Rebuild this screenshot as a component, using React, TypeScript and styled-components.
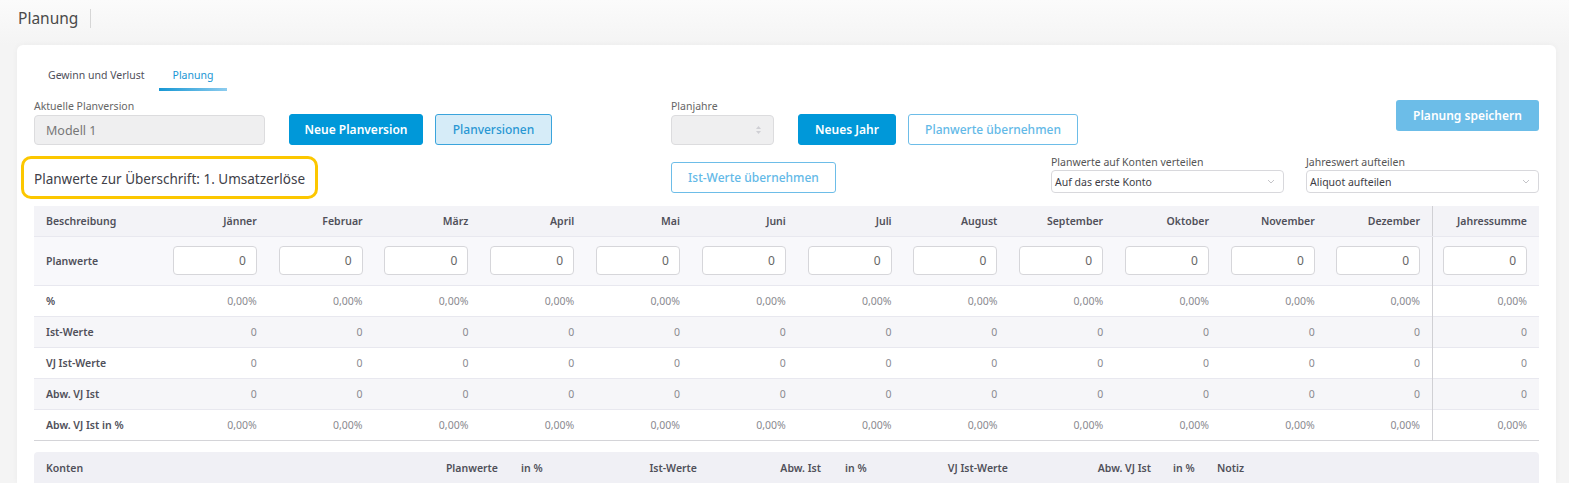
import React from "react";
import styled, { createGlobalStyle } from "styled-components";

const GlobalStyle = createGlobalStyle`
  html, body {
    margin: 0;
    padding: 0;
    background: #f4f4f4;
    font-family: "Noto Sans", "Open Sans", sans-serif;
  }
  * { box-sizing: border-box; }
`;

const months = [
  "Jänner",
  "Februar",
  "März",
  "April",
  "Mai",
  "Juni",
  "Juli",
  "August",
  "September",
  "Oktober",
  "November",
  "Dezember",
];

const rows = [
  { label: "%", value: "0,00%", shaded: false },
  { label: "Ist-Werte", value: "0", shaded: true },
  { label: "VJ Ist-Werte", value: "0", shaded: false },
  { label: "Abw. VJ Ist", value: "0", shaded: true },
  { label: "Abw. VJ Ist in %", value: "0,00%", shaded: false },
];

const kontenCols = [
  { label: "Konten", w: 340, align: "left", pad: 12 },
  { label: "Planwerte", w: 136, align: "right", pad: 12 },
  { label: "in %", w: 60, align: "left", pad: 11 },
  { label: "Ist-Werte", w: 139, align: "right", pad: 12 },
  { label: "Abw. Ist", w: 124, align: "right", pad: 12 },
  { label: "in %", w: 60, align: "left", pad: 12 },
  { label: "VJ Ist-Werte", w: 127, align: "right", pad: 12 },
  { label: "Abw. VJ Ist", w: 143, align: "right", pad: 12 },
  { label: "in %", w: 42, align: "left", pad: 10 },
  { label: "Notiz", w: 0, align: "left", pad: 12 },
];

function UpDown() {
  return (
    <svg width="7" height="10" viewBox="0 0 7 10">
      <path d="M3.5 1 L6 4 L1 4 Z" fill="#cfcfd4" />
      <path d="M3.5 9 L6 6 L1 6 Z" fill="#cfcfd4" />
    </svg>
  );
}

function Chevron() {
  return (
    <svg width="8" height="5" viewBox="0 0 8 5">
      <path d="M1 1 L4 4 L7 1" fill="none" stroke="#c4c4c8" strokeWidth="1" />
    </svg>
  );
}

export default function App() {
  return (
    <>
      <GlobalStyle />
      <TopBar>
        <PageTitle>Planung</PageTitle>
      </TopBar>
      <Card>
        <Tabs>
          <Tab>Gewinn und Verlust</Tab>
          <Tab active>Planung</Tab>
        </Tabs>

        <ControlRow>
          <LeftSlot>
            <Field>
              <Label>Aktuelle Planversion</Label>
              <TextBox width={231}>Modell 1</TextBox>
            </Field>
            <Button variant="solid" width={134}>
              Neue Planversion
            </Button>
            <Button variant="soft" width={117}>
              Planversionen
            </Button>
          </LeftSlot>
          <Field>
            <Label>Planjahre</Label>
            <TextBox width={103}>
              <Spacer />
              <UpDown />
            </TextBox>
          </Field>
          <Button variant="solid" width={98}>
            Neues Jahr
          </Button>
          <Button variant="outline" width={170}>
            Planwerte übernehmen
          </Button>
          <Spacer />
          <SaveButton>Planung speichern</SaveButton>
        </ControlRow>

        <SecondRow>
          <LeftSlot>
            <Highlight>Planwerte zur Überschrift: 1. Umsatzerlöse</Highlight>
          </LeftSlot>
          <Button variant="outline" width={165}>
            Ist-Werte übernehmen
          </Button>
          <Spacer />
          <SmallField>
            <SmallLabel>Planwerte auf Konten verteilen</SmallLabel>
            <SelectBox>
              Auf das erste Konto
              <Chevron />
            </SelectBox>
          </SmallField>
          <SmallField>
            <SmallLabel>Jahreswert aufteilen</SmallLabel>
            <SelectBox>
              Aliquot aufteilen
              <Chevron />
            </SelectBox>
          </SmallField>
        </SecondRow>

        <PlanTable>
          <colgroup>
            <col style={{ width: 129 }} />
            {months.map((m) => (
              <col key={m} style={{ width: 105.8 }} />
            ))}
            <col />
          </colgroup>
          <thead>
            <tr>
              <HeadCell first>Beschreibung</HeadCell>
              {months.map((m) => (
                <HeadCell key={m}>{m}</HeadCell>
              ))}
              <HeadCell total>Jahressumme</HeadCell>
            </tr>
          </thead>
          <tbody>
            <InputRow>
              <LabelCell>Planwerte</LabelCell>
              {months.map((m) => (
                <ValueCell key={m}>
                  <NumberBox>0</NumberBox>
                </ValueCell>
              ))}
              <ValueCell total>
                <NumberBox>0</NumberBox>
              </ValueCell>
            </InputRow>
            {rows.map((r, i) => (
              <DataRow key={r.label} shaded={r.shaded} last={i === rows.length - 1}>
                <LabelCell>{r.label}</LabelCell>
                {months.map((m) => (
                  <ValueCell key={m}>{r.value}</ValueCell>
                ))}
                <ValueCell total>{r.value}</ValueCell>
              </DataRow>
            ))}
          </tbody>
        </PlanTable>

        <KontenHead>
          {kontenCols.map((c, i) => (
            <KontenCell key={i} w={c.w} align={c.align} pad={c.pad}>
              {c.label}
            </KontenCell>
          ))}
        </KontenHead>
      </Card>
    </>
  );
}

const TopBar = styled.div`
  height: 45px;
  display: flex;
  align-items: flex-start;
  padding: 9px 0 0 18px;
  background: linear-gradient(#fbfbfb, #f4f4f4);
`;

const PageTitle = styled.div`
  font-size: 15.5px;
  color: #4a4a4a;
  line-height: 19px;
  padding-right: 12px;
  border-right: 1px solid #d6d6d6;
`;

const Card = styled.div`
  margin: 0 13px 0 17px;
  background: #fff;
  border-radius: 6px 6px 0 0;
  box-shadow: 0 0 6px rgba(0, 0, 0, 0.04);
  padding: 20px 17px 0 17px;
  height: 438px;
  overflow: hidden;
`;

const Tabs = styled.div`
  display: flex;
  height: 26px;
`;

const Tab = styled.div<{ active?: boolean }>`
  padding: 3px 14px 0;
  font-size: 10.5px;
  color: ${(p) => (p.active ? "#1a96d4" : "#4f4f5a")};
  border-bottom: 3px solid transparent;
  border-image: ${(p) =>
    p.active ? "linear-gradient(90deg, #1596d3, #8fcdef) 1" : "none"};
`;

const ControlRow = styled.div`
  display: flex;
  align-items: flex-end;
  margin-top: 9px;
`;

const SecondRow = styled.div`
  display: flex;
  align-items: center;
  margin-top: 11px;
`;

const LeftSlot = styled.div`
  width: 637px;
  flex: none;
  display: flex;
  align-items: flex-end;
`;

const Field = styled.div`
  display: flex;
  flex-direction: column;
  margin-right: 24px;
`;

const Label = styled.div`
  font-size: 10.5px;
  color: #666;
  line-height: 13px;
  margin-bottom: 2px;
`;

const TextBox = styled.div<{ width: number }>`
  width: ${(p) => p.width}px;
  height: 30px;
  background: #efeff0;
  border: 1px solid #dcdcde;
  border-radius: 4px;
  display: flex;
  align-items: center;
  padding: 0 11px;
  font-size: 12.5px;
  color: #777;
`;

const Spacer = styled.div`
  flex: 1;
`;

const Button = styled.div<{ variant: "solid" | "soft" | "outline"; width: number }>`
  width: ${(p) => p.width}px;
  height: 31px;
  margin-right: 12px;
  border-radius: 3px;
  display: flex;
  align-items: center;
  justify-content: center;
  font-size: 12px;
  background: ${(p) =>
    p.variant === "solid" ? "#0098d9" : p.variant === "soft" ? "#d6ecf8" : "#fff"};
  color: ${(p) =>
    p.variant === "solid" ? "#fff" : p.variant === "soft" ? "#2997d3" : "#63b9e7"};
  border: 1px solid
    ${(p) =>
      p.variant === "solid" ? "#0098d9" : p.variant === "soft" ? "#3aa4dc" : "#6dbde8"};
  font-weight: ${(p) => (p.variant === "solid" ? 600 : 500)};
`;

const SaveButton = styled.div`
  align-self: flex-start;
  width: 143px;
  height: 31px;
  border-radius: 3px;
  background: #6cbde8;
  color: #fff;
  font-size: 12px;
  font-weight: 600;
  display: flex;
  align-items: center;
  justify-content: center;
`;

const Highlight = styled.div`
  margin-left: -13px;
  width: 297px;
  height: 43px;
  border: 3px solid #fcc700;
  border-radius: 10px;
  display: flex;
  align-items: center;
  padding: 3px 0 0 10px;
  font-size: 13.5px;
  color: #404048;
`;

const SmallField = styled.div`
  display: flex;
  flex-direction: column;
  width: 233px;
  margin-left: 22px;
  margin-top: -6px;
`;

const SmallLabel = styled.div`
  font-size: 10.5px;
  color: #555;
  line-height: 13px;
  margin-bottom: 1px;
`;

const SelectBox = styled.div`
  height: 23px;
  border: 1px solid #d8d8dc;
  border-radius: 4px;
  display: flex;
  align-items: center;
  justify-content: space-between;
  padding: 0 8px 0 3px;
  font-size: 10.5px;
  color: #3d3d45;
`;

const PlanTable = styled.table`
  margin-top: 7px;
  width: 1505px;
  border-collapse: collapse;
  table-layout: fixed;
  font-size: 10.5px;
  border-bottom: 1px solid #d4d4d8;
`;

const HeadCell = styled.th<{ first?: boolean; total?: boolean }>`
  height: 30px;
  background: #f3f3f7;
  color: #50505a;
  font-weight: 600;
  text-align: ${(p) => (p.first ? "left" : "right")};
  padding: ${(p) => (p.first ? "0 0 0 12px" : "0 12px 0 0")};
  border-bottom: 1px solid #e8e8ef;
  border-left: ${(p) => (p.total ? "1px solid #d0d0d4" : "none")};
`;

const InputRow = styled.tr`
  height: 49px;
  background: #f8f8fb;
  border-bottom: 1px solid #e8e8ef;
`;

const DataRow = styled.tr<{ shaded: boolean; last: boolean }>`
  height: 31px;
  background: ${(p) => (p.shaded ? "#f6f6f9" : "#fff")};
  border-bottom: ${(p) => (p.last ? "none" : "1px solid #e8e8ef")};
`;

const LabelCell = styled.td`
  padding-left: 12px;
  color: #50505a;
  font-weight: 600;
`;

const ValueCell = styled.td<{ total?: boolean }>`
  text-align: right;
  padding-right: 12px;
  color: #8a8a8f;
  border-left: ${(p) => (p.total ? "1px solid #d0d0d4" : "none")};
`;

const NumberBox = styled.div`
  margin-left: auto;
  width: 84px;
  height: 29px;
  background: #fff;
  border: 1px solid #d6d6da;
  border-radius: 4px;
  display: flex;
  align-items: center;
  justify-content: flex-end;
  padding-right: 10px;
  font-size: 12px;
  color: #666;
`;

const KontenHead = styled.div`
  margin-top: 11px;
  width: 1505px;
  height: 32px;
  background: #f0f0f5;
  border-radius: 4px 4px 0 0;
  display: flex;
  align-items: center;
  font-size: 10.5px;
  font-weight: 600;
  color: #50505a;
`;

const KontenCell = styled.div<{ w: number; align: string; pad: number }>`
  flex: ${(p) => (p.w ? `0 0 ${p.w}px` : "1")};
  text-align: ${(p) => p.align};
  padding-left: ${(p) => (p.align === "left" ? p.pad : 0)}px;
  padding-right: ${(p) => (p.align === "right" ? p.pad : 0)}px;
`;
